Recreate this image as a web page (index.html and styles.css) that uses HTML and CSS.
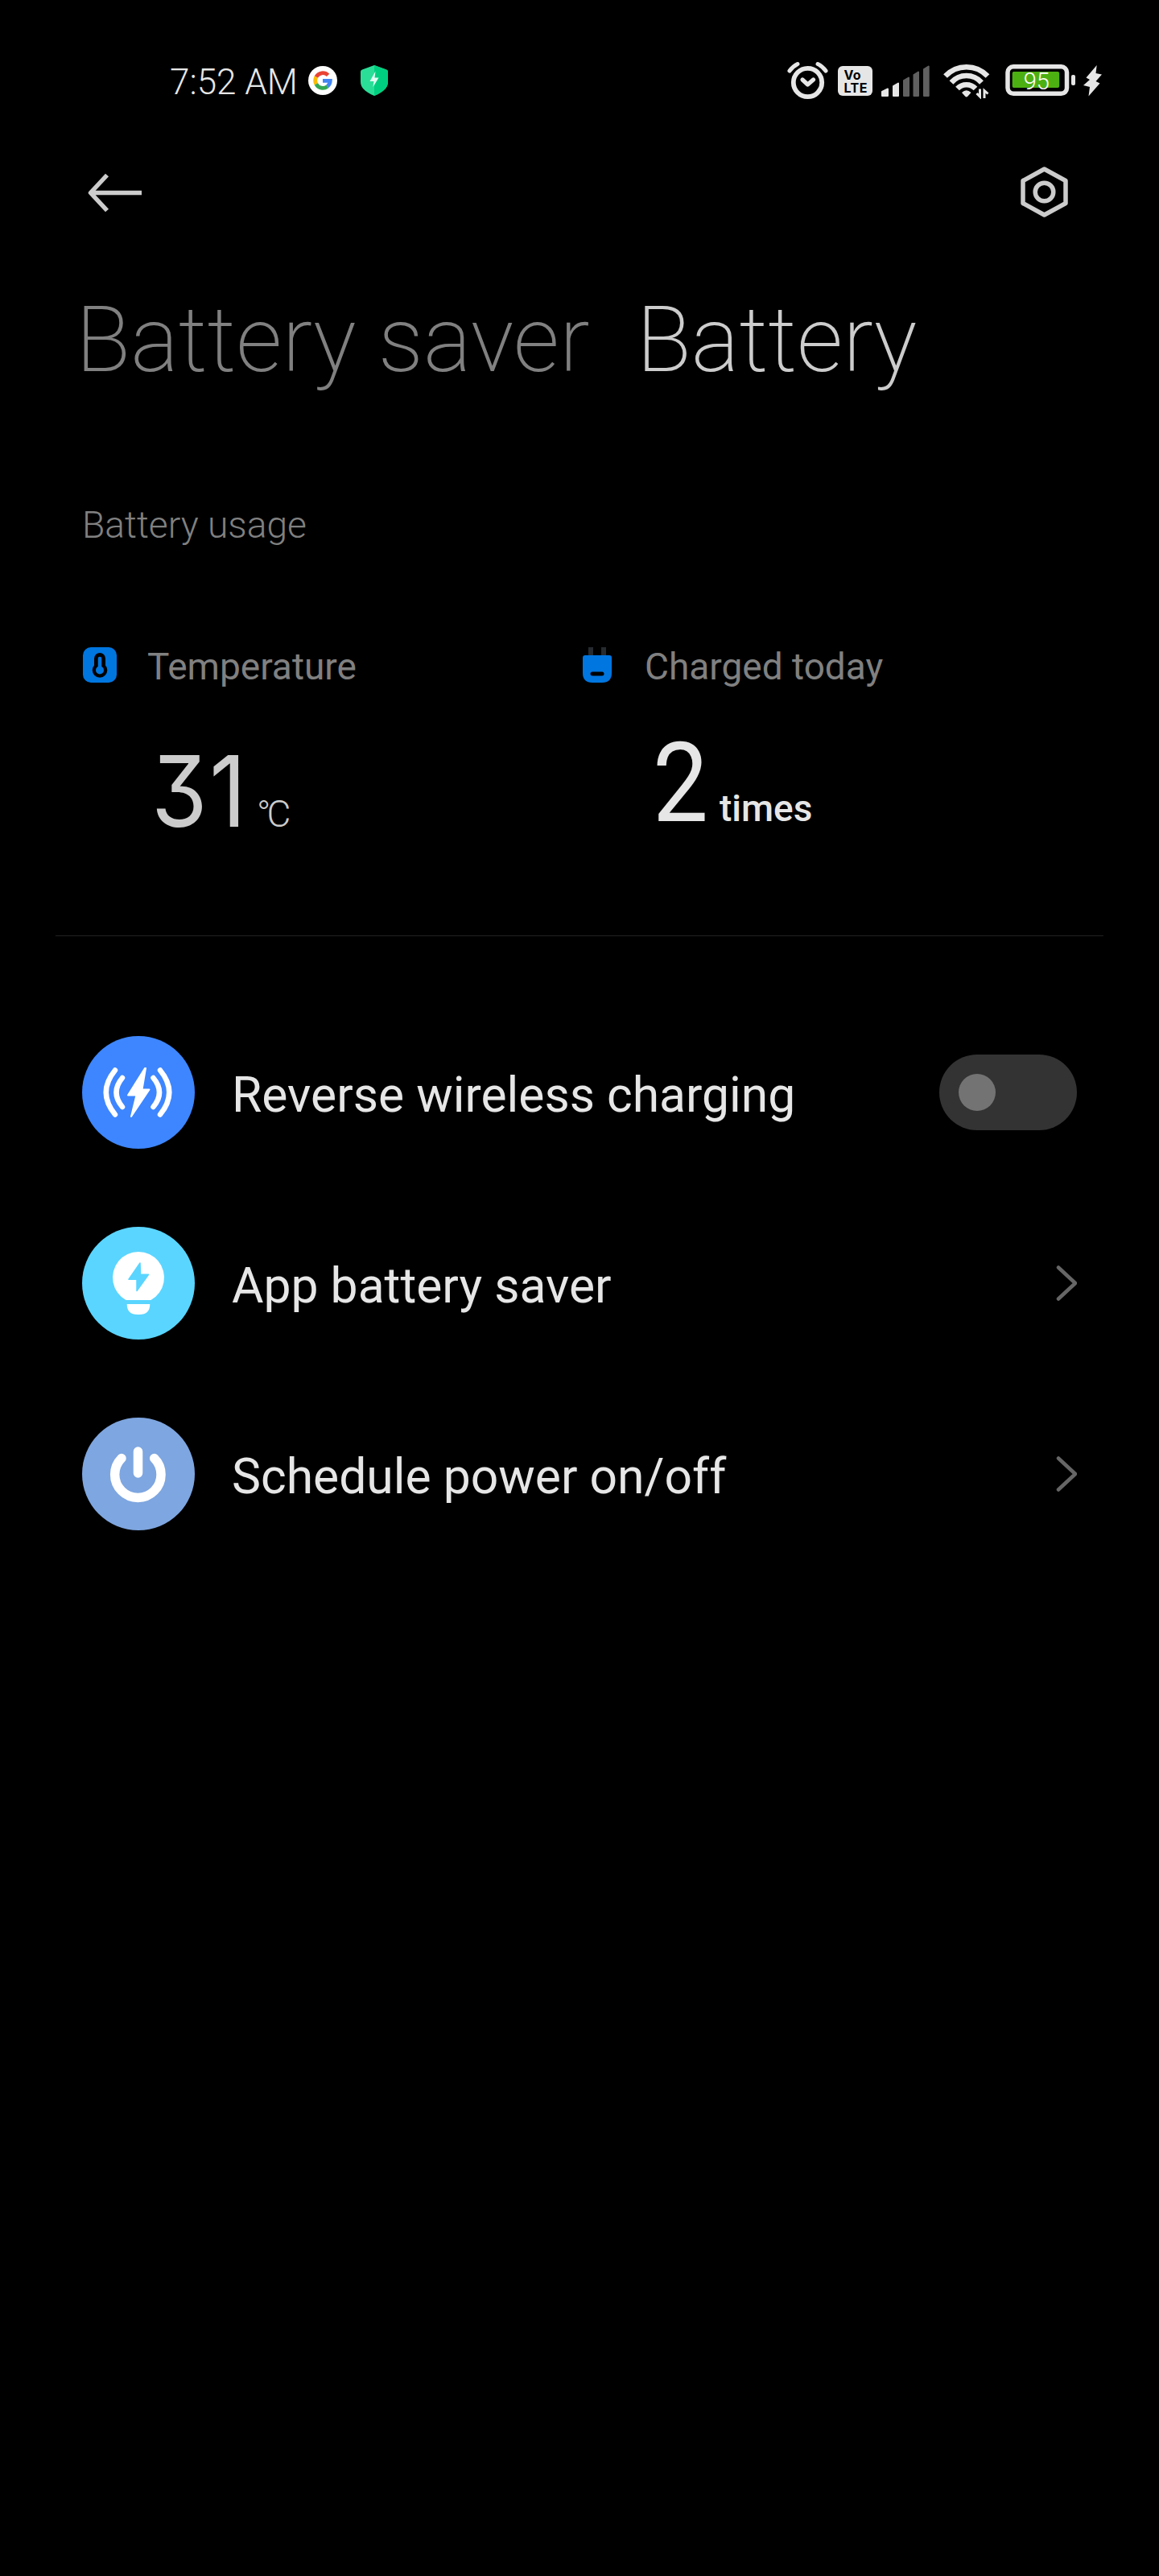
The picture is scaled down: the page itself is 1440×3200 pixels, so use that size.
FILE: index.html
```
<!DOCTYPE html>
<html lang="en">
<head>
  <meta charset="UTF-8">
  <title>Battery</title>
  <meta name="viewport" content="width=device-width, initial-scale=1.0">
  <link rel="stylesheet" href="styles.css">
</head>
<body>
  <div class="status-bar">
    <span class="time">7:52 AM</span>
    <svg class="google" width="36" height="36" viewBox="0 0 36 36" fill="none" stroke-width="4.8">
      <circle cx="18" cy="18" r="18" fill="#fff"/>
      <path d="M9.8 13.6A9.3 9.3 0 0 1 24.6 11.4" stroke="#e94335"/>
      <path d="M9.8 22.4A9.3 9.3 0 0 1 9.8 13.6" stroke="#fbbc05"/>
      <path d="M23.8 25.3A9.3 9.3 0 0 1 9.8 22.4" stroke="#34a853"/>
      <path d="M18 18.4H27.3A9.3 9.3 0 0 1 23.8 25.3" stroke="#4285f4"/>
    </svg>
    <svg class="shield" width="34" height="38" viewBox="0 0 34 38">
      <path d="M17 0L32 5.5Q34 6.3 34 8V21Q34 31 17 38Q0 31 0 21V8Q0 6.3 2 5.5Z" fill="#2bde97"/>
      <path d="M17 0L32 5.5Q34 6.3 34 8V21Q34 31 17 38Z" fill="#00cf80"/>
      <path d="M18.5 7.5L11.5 20H16.5L15.5 27L22.5 15.5H17.5Z" fill="#e2fff3"/>
    </svg>

    <div class="status-icons">
      <svg class="alarm" width="52" height="48" viewBox="0 0 52 48" fill="none" stroke="#e6e6e6" stroke-linecap="round" stroke-linejoin="round">
        <circle cx="26.5" cy="26.5" r="17.7" stroke-width="5.8"/>
        <path d="M20 23L26.5 29L33.5 23" stroke-width="5.2"/>
        <path d="M4 12Q8 6.5 14 3.5M39 3.5Q45 6.5 49 12" stroke-width="5"/>
      </svg>
      <svg class="volte" width="43" height="37" viewBox="0 0 43 37">
        <rect width="43" height="37" rx="6" fill="#e6e6e6"/>
        <text x="7.5" y="16.5" textLength="21">Vo</text>
        <text x="7.5" y="32.5" textLength="29">LTE</text>
      </svg>
      <svg class="signal" width="60" height="39" viewBox="0 0 60 39" stroke-width="2" stroke-linejoin="round">
        <path d="M1 33L8 29.5V38H1ZM15 26L21 22.5V38H15Z" fill="#e6e6e6" stroke="#e6e6e6"/>
        <path d="M28 19L34 15.5V38H28ZM40.5 12L46 8.5V38H40.5ZM53 5L58.7 1.5V38H53Z" fill="#606060" stroke="#606060"/>
      </svg>
      <svg class="wifi" width="58" height="45" viewBox="0 0 58 45" fill="none" stroke="#e6e6e6" stroke-width="6.5">
        <path d="M2.5 16.5A36 36 0 0 1 55 16.5"/>
        <path d="M10 24.5A25 25 0 0 1 47.5 24.5"/>
        <path d="M17.5 32A15.5 15.5 0 0 1 40 32"/>
        <path d="M23 37Q28.7 31.5 34.5 37L30.5 41.5Q28.7 43.5 27 41.5Z" fill="#e6e6e6" stroke="none"/>
        <path d="M45.5 32.5V42L41.5 38M51 44V34.5L55.5 38.5" stroke-width="3"/>
      </svg>
      <svg class="battery" width="88" height="40" viewBox="0 0 88 40">
        <rect x="3" y="2.8" width="73.5" height="33.5" rx="7" fill="none" stroke="#e6e6e6" stroke-width="5.5"/>
        <rect x="8.7" y="9" width="58.5" height="20" rx="2" fill="#4db012"/>
        <rect x="82" y="13" width="5" height="13" rx="2" fill="#e6e6e6"/>
        <text x="22.7" y="30.5">95</text>
      </svg>
      <svg class="bolt" width="24" height="39" viewBox="0 0 24 39">
        <path d="M16.7 0L3.5 15.5L8 18L0 25L8 27L6.5 38.5L20.5 22.5L15.5 20L23 11.5L15.5 10Z" fill="#e6e6e6"/>
      </svg>
    </div>
  </div>

  <nav class="nav">
    <svg width="67" height="50" viewBox="0 0 67 50" fill="none" stroke="#ccc" stroke-width="5.5" stroke-linejoin="round">
      <path d="M24 3.5L3.5 25.5L24 47.5M4.500 25.5H67"/>
    </svg>
    <svg width="60" height="64" viewBox="0 0 60 64" fill="none" stroke="#ccc" stroke-width="5.5" stroke-linejoin="round">
      <path d="M29.5 3L56 17.5V45.5L29.5 60L3 45.5V17.5Z"/>
      <circle cx="29.5" cy="31.5" r="11.3"/>
    </svg>
  </nav>

  <div class="tabs">
    <span class="tab">Battery saver</span>
    <span class="tab active">Battery</span>
  </div>

  <h2>Battery usage</h2>

  <div class="stats">
    <div class="stat">
      <div class="stat-label">
        <svg width="44" height="44" viewBox="0 0 44 44">
          <rect x="1" width="42" height="44" rx="10" fill="#0076e0"/>
          <path d="M22 14V30" stroke="#000" stroke-width="14" stroke-linecap="round"/>
          <circle cx="22" cy="28.5" r="9.3"/>
          <circle cx="22" cy="28.5" r="5" fill="#0076e0"/>
          <path d="M22 14V28" stroke="#0076e0" stroke-width="4.5" stroke-linecap="round"/>
        </svg>
        <span>Temperature</span>
      </div>
      <div class="value temp"><span class="num">31</span><span class="unit">°C</span></div>
    </div>
    <div class="stat">
      <div class="stat-label">
        <svg width="44" height="44" viewBox="0 0 44 44">
          <path d="M11 0H17V12H11ZM27 0H33V12H27Z" fill="#262b30"/>
          <path d="M7 10H37Q40 10 40 13V32Q40 44 28 44H16Q4 44 4 32V13Q4 10 7 10Z" fill="#0076e0"/>
          <rect x="13.5" y="30.5" width="17" height="5" rx="2.5"/>
        </svg>
        <span>Charged today</span>
      </div>
      <div class="value times"><span class="num">2</span><span class="unit">times</span></div>
    </div>
  </div>

  <div class="list">
    <div class="row">
      <svg width="140" height="140" viewBox="0 0 140 140">
        <circle cx="70" cy="70" r="70" fill="#3d86ff"/>
        <path d="M78 40L57 73.5H67.5L61 100L83.5 66.5H74.5L79 40Z" fill="#fff" stroke="#fff" stroke-width="2" stroke-linejoin="round"/>
        <path d="M41 42.5Q18.5 70 41 97.5M50 52Q35 70 50 88M97 42.5Q119.5 70 97 97.5M88.5 52Q103.5 70 88.5 88" fill="none" stroke="#fff" stroke-width="6.5" stroke-linecap="round"/>
      </svg>
      <span class="row-text">Reverse wireless charging</span>
      <div class="toggle"><div class="knob"></div></div>
    </div>
    <div class="row">
      <svg width="140" height="140" viewBox="0 0 140 140">
        <circle cx="70" cy="70" r="70" fill="#5ad5ff"/>
        <path d="M54.5 91A32 32 0 1 1 85.5 91ZM55.7 96H84.3Q84.3 109 71 109H69Q55.7 109 55.7 96Z" fill="#fff"/>
        <path d="M72 45L58 65.3H68V79.5L82.5 59.3H72.5Z" fill="#5ad5ff" stroke="#5ad5ff" stroke-width="1.5" stroke-linejoin="round"/>
      </svg>
      <span class="row-text">App battery saver</span>
      <svg class="chevron" width="26" height="44" viewBox="0 0 26 44"><path d="M3 2.5L24 22L3 41.5"/></svg>
    </div>
    <div class="row">
      <svg width="140" height="140" viewBox="0 0 140 140">
        <circle cx="70" cy="70" r="70" fill="#7ea6e0"/>
        <path d="M49 50.5A28.7 28.7 0 1 0 89.7 50.5M69.5 42V69" fill="none" stroke="#fff" stroke-width="11.5" stroke-linecap="round"/>
      </svg>
      <span class="row-text">Schedule power on/off</span>
      <svg class="chevron" width="26" height="44" viewBox="0 0 26 44"><path d="M3 2.5L24 22L3 41.5"/></svg>
    </div>
  </div>
</body>
</html>
```

FILE: styles.css
```
body {
  margin: 0;
  min-height: 3200px;
  background: #000;
  color: #e6e6e6;
  font-family: Roboto, sans-serif;
}
svg {
  display: block;
  flex-shrink: 0;
}

/* status bar */
.status-bar {
  display: flex;
  align-items: center;
  height: 200px;
  padding: 0 70px 0 211px;
  box-sizing: border-box;
}
.time {
  font-size: 44px;
  font-weight: 300;
  padding-top: 4px;
}
.google {
  margin-left: 13px;
}
.shield {
  margin-left: 29px;
}
.status-icons {
  display: flex;
  align-items: center;
  margin-left: auto;
}
.volte {
  margin-left: 12px;
}
.volte text {
  font: 700 16px Inter, sans-serif;
}
.signal {
  margin-left: 11px;
}
.wifi {
  margin-left: 17px;
}
.battery {
  margin-left: 19px;
}
.battery text {
  font: 300 29px Roboto, sans-serif;
  fill: #fff;
}
.bolt {
  margin-left: 9px;
}

.nav {
  display: flex;
  justify-content: space-between;
  align-items: center;
  height: 77px;
  padding: 0 112px 0 109px;
}

.tabs {
  display: flex;
  gap: 58px;
  margin-top: 89px;
  padding-left: 94px;
  font-size: 112.3px;
  font-weight: 200;
  line-height: 113px;
  white-space: nowrap;
}
.tab {
  color: #808080;
}
.tab.active {
  color: #ccc;
}

h2 {
  margin: 146px 0 0;
  padding-left: 102px;
  font-size: 46.2px;
  font-weight: 300;
  line-height: 54px;
  color: #808080;
}

/* usage numbers */
.stats {
  display: grid;
  grid-template-columns: 1fr 1fr;
  height: 361px;
  margin: 122px 69px 0;
  padding: 0 33px;
  border-bottom: 1px solid #222;
}
.stat-label {
  display: flex;
  align-items: center;
  gap: 37px;
  font-size: 46px;
  line-height: 54px;
  color: #808080;
}
.stat-label svg {
  margin-bottom: 4px;
}
.value {
  display: flex;
  align-items: baseline;
}
.num {
  display: inline-block;
  line-height: 120px;
  transform-origin: left;
}
.unit {
  font-size: 46px;
  line-height: 54px;
}
.temp {
  margin-top: 68px;
  padding-left: 86px;
  color: #ccc;
}
.temp .num {
  width: 131px;
  font-family: Inter, sans-serif;
  font-size: 122px;
  font-feature-settings: "cv09" 1;
  letter-spacing: 3px;
  transform: scaleX(0.92);
}
.temp .unit {
  font-weight: 300;
  letter-spacing: -5px;
}
.times {
  margin-top: 58px;
  padding-left: 91px;
}
.times .num {
  width: 83px;
  font-size: 138px;
  transform: scaleX(0.89);
}
.times .unit {
  font-weight: 500;
}

/* settings list */
.list {
  padding: 75px 102px 0;
}
.row {
  display: flex;
  align-items: center;
  height: 237px;
}
.row-text {
  flex: 1;
  margin-left: 46px;
  padding-top: 8px;
  font-size: 60.6px;
}
.toggle {
  display: flex;
  align-items: center;
  width: 171px;
  height: 94px;
  padding-left: 24px;
  box-sizing: border-box;
  border-radius: 47px;
  background: #333;
}
.knob {
  width: 46px;
  height: 46px;
  border-radius: 50%;
  background: #737373;
}
.chevron {
  fill: none;
  stroke: #666;
  stroke-width: 4.5;
  stroke-linecap: round;
  stroke-linejoin: round;
}
```
